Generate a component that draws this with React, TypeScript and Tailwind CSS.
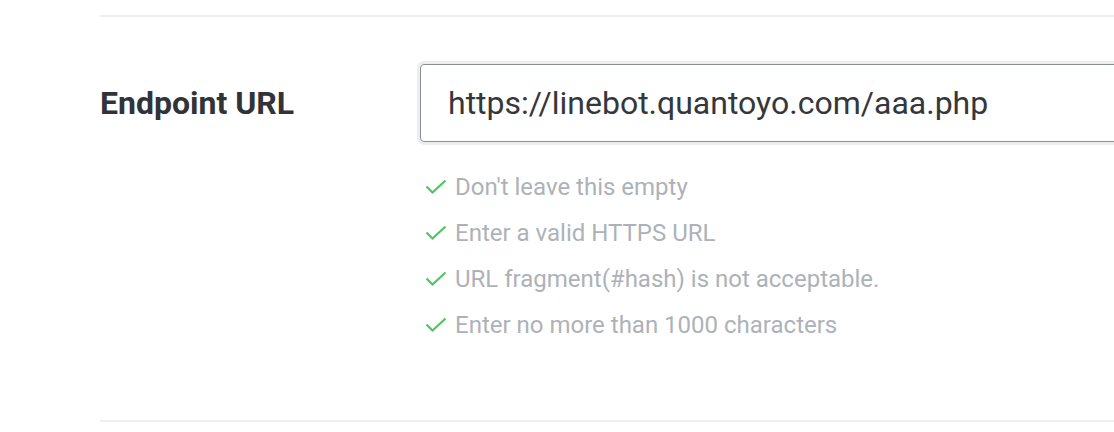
const rules = [
  "Don't leave this empty",
  "Enter a valid HTTPS URL",
  "URL fragment(#hash) is not acceptable.",
  "Enter no more than 1000 characters",
];

function Check() {
  return (
    <svg width="22" height="16" viewBox="0 0 22 16" fill="none" className="shrink-0">
      <path d="M1.5 7.5 L7.5 13.5 L20.5 1.5" stroke="#4cc764" strokeWidth="2.2" />
    </svg>
  );
}

export default function App() {
  return (
    <div className="w-[1114px] h-[432px] overflow-hidden bg-white pl-[100px] font-['Roboto',sans-serif]">
      <div className="mt-[15px] h-[2px] bg-[#efefef]" />

      <div className="mt-[47px] flex">
        <div className="flex h-[78px] w-[320px] shrink-0 items-center text-[32px] font-bold text-[#303338]">
          Endpoint URL
        </div>

        <div className="shrink-0">
          <div className="flex h-[78px] w-[760px] items-center rounded-[4px] border border-[#8b9098] px-[27px] text-[32px] text-[#34373b] ring-[3px] ring-[#ededed]">
            https://linebot.quantoyo.com/aaa.php
          </div>

          <ul className="mt-[22px]">
            {rules.map((r) => (
              <li key={r} className="flex h-[46px] items-center gap-[8px] pl-[5px] text-[24px] text-[#adb2b9]">
                <Check />
                <span>{r}</span>
              </li>
            ))}
          </ul>
        </div>
      </div>

      <div className="mt-[72px] h-[2px] bg-[#efefef]" />
    </div>
  );
}
